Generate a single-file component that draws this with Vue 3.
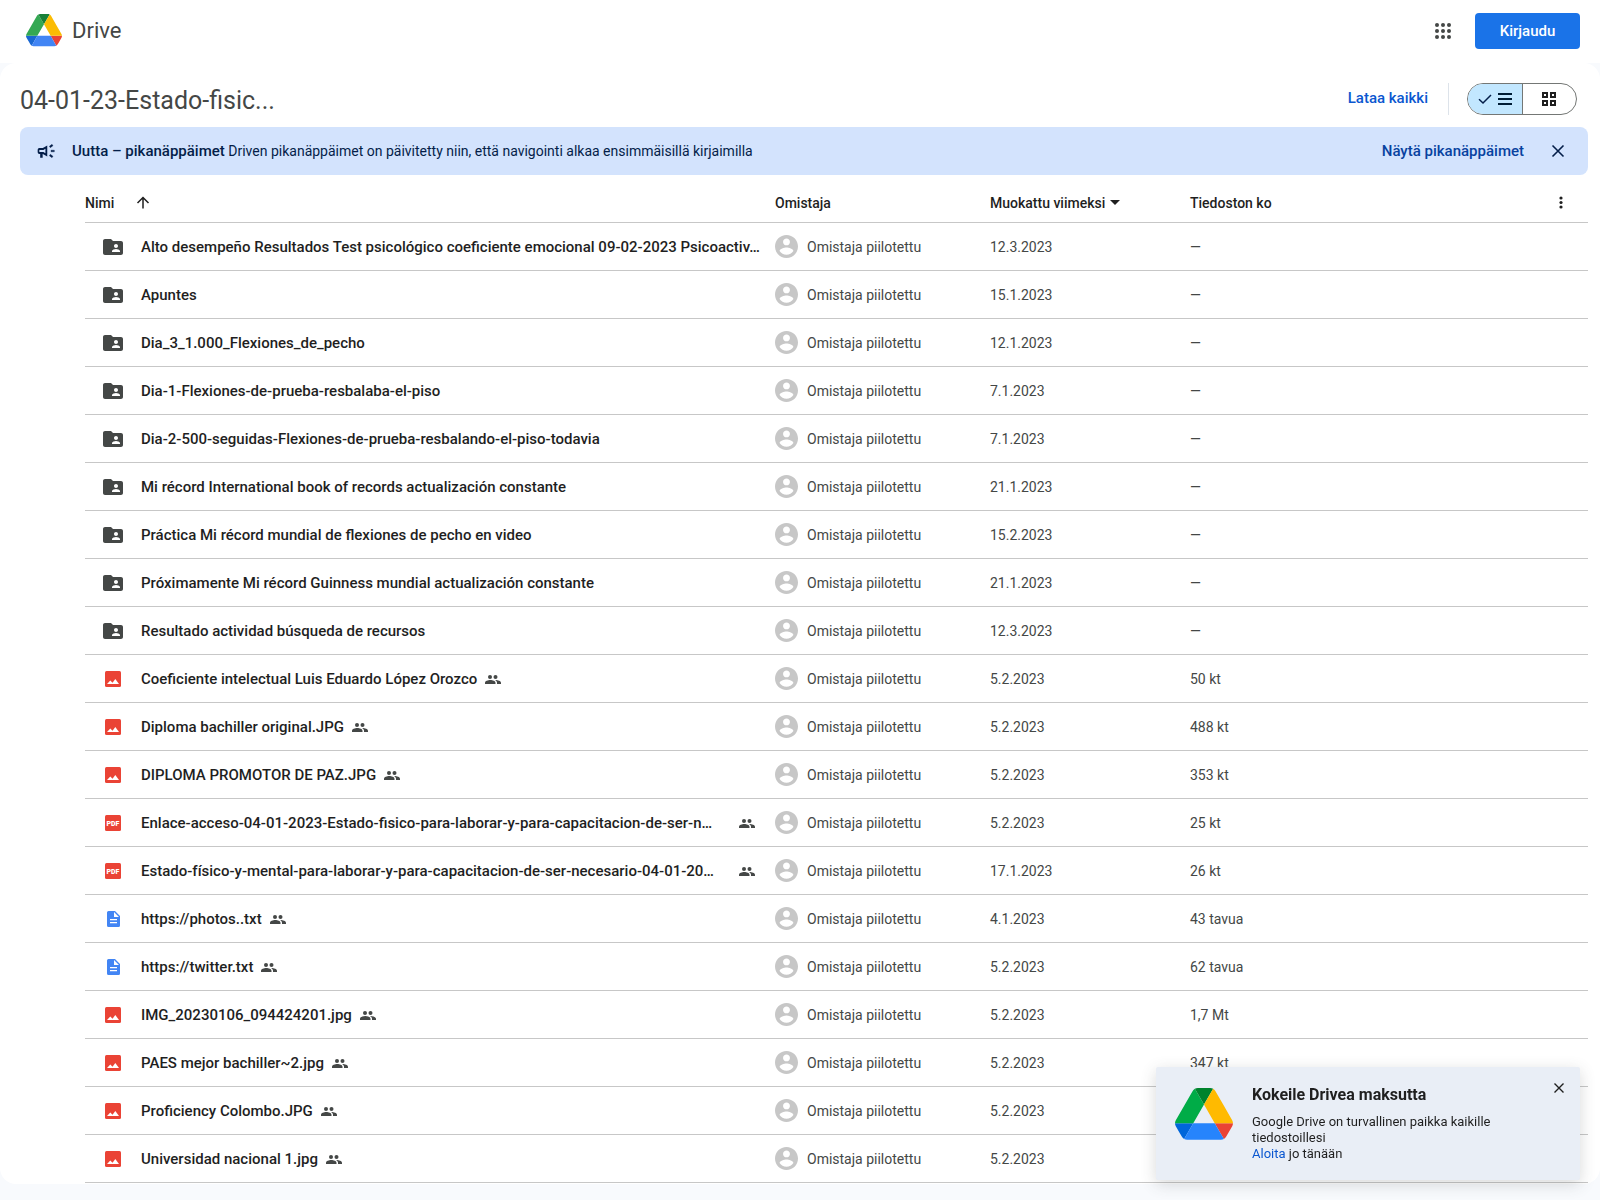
<script setup>
import { ref } from 'vue'

const logoParts = [
  { d: 'm6.6 66.85 3.85 6.65c.8 1.4 1.95 2.5 3.3 3.3l13.75-23.8h-27.5c0 1.55.4 3.1 1.2 4.5z', header: '#1967d2', promo: '#0066da' },
  { d: 'm43.65 25-13.75-23.8c-1.35.8-2.5 1.9-3.3 3.3l-25.4 44a9.06 9.06 0 0 0-1.2 4.5h27.5z', header: '#34a853', promo: '#00ac47' },
  { d: 'm73.55 76.8c1.35-.8 2.5-1.9 3.3-3.3l1.6-2.75 7.65-13.25c.8-1.4 1.2-2.95 1.2-4.5h-27.502z', header: '#ea4335', promo: '#ea4335' },
  { d: 'm43.65 25 13.75-23.8c-1.35-.8-2.9-1.2-4.5-1.2h-18.5c-1.6 0-3.15.45-4.5 1.2z', header: '#188038', promo: '#00832d' },
  { d: 'm59.8 53h-32.3l-13.75 23.8c1.35.8 2.9 1.2 4.5 1.2h50.8c1.6 0 3.15-.45 4.5-1.2z', header: '#4285f4', promo: '#2684fc' },
  { d: 'm73.4 26.5-12.7-22c-.8-1.4-1.95-2.5-3.3-3.3l-13.75 23.8 16.15 28h27.45c0-1.55-.4-3.1-1.2-4.5z', header: '#fbbc04', promo: '#ffba00' },
]

const dots = [6, 12, 18].flatMap((y) => [6, 12, 18].map((x) => ({ x, y })))

const view = ref('list')
const bannerOpen = ref(true)
const promoOpen = ref(true)

const files = [
  { type: 'folder', name: 'Alto desempeño Resultados Test psicológico coeficiente emocional 09-02-2023 Psicoactiv…', date: '12.3.2023', size: '—' },
  { type: 'folder', name: 'Apuntes', date: '15.1.2023', size: '—' },
  { type: 'folder', name: 'Dia_3_1.000_Flexiones_de_pecho', date: '12.1.2023', size: '—' },
  { type: 'folder', name: 'Dia-1-Flexiones-de-prueba-resbalaba-el-piso', date: '7.1.2023', size: '—' },
  { type: 'folder', name: 'Dia-2-500-seguidas-Flexiones-de-prueba-resbalando-el-piso-todavia', date: '7.1.2023', size: '—' },
  { type: 'folder', name: 'Mi récord International book of records actualización constante', date: '21.1.2023', size: '—' },
  { type: 'folder', name: 'Práctica Mi récord mundial de flexiones de pecho en video', date: '15.2.2023', size: '—' },
  { type: 'folder', name: 'Próximamente Mi récord Guinness mundial actualización constante', date: '21.1.2023', size: '—' },
  { type: 'folder', name: 'Resultado actividad búsqueda de recursos', date: '12.3.2023', size: '—' },
  { type: 'image', name: 'Coeficiente intelectual Luis Eduardo López Orozco', date: '5.2.2023', size: '50 kt' },
  { type: 'image', name: 'Diploma bachiller original.JPG', date: '5.2.2023', size: '488 kt' },
  { type: 'image', name: 'DIPLOMA PROMOTOR DE PAZ.JPG', date: '5.2.2023', size: '353 kt' },
  { type: 'pdf', name: 'Enlace-acceso-04-01-2023-Estado-fisico-para-laborar-y-para-capacitacion-de-ser-n…', date: '5.2.2023', size: '25 kt', long: true },
  { type: 'pdf', name: 'Estado-físico-y-mental-para-laborar-y-para-capacitacion-de-ser-necesario-04-01-20…', date: '17.1.2023', size: '26 kt', long: true },
  { type: 'text', name: 'https://photos..txt', date: '4.1.2023', size: '43 tavua' },
  { type: 'text', name: 'https://twitter.txt', date: '5.2.2023', size: '62 tavua' },
  { type: 'image', name: 'IMG_20230106_094424201.jpg', date: '5.2.2023', size: '1,7 Mt' },
  { type: 'image', name: 'PAES mejor bachiller~2.jpg', date: '5.2.2023', size: '347 kt' },
  { type: 'image', name: 'Proficiency Colombo.JPG', date: '5.2.2023', size: '' },
  { type: 'image', name: 'Universidad nacional 1.jpg', date: '5.2.2023', size: '' },
]
</script>

<template>
  <div class="page">
    <header class="topbar">
      <a class="brand" href="#">
        <svg class="brand-logo" viewBox="0 0 87.3 78" aria-hidden="true">
          <path v-for="p in logoParts" :key="p.d" :d="p.d" :fill="p.header" />
        </svg>
        <span>Drive</span>
      </a>
      <div class="account">
        <button class="icon-btn" aria-label="Google-sovellukset">
          <svg width="24" height="24" viewBox="0 0 24 24" fill="#444746">
            <circle v-for="d in dots" :key="d.x + '-' + d.y" :cx="d.x" :cy="d.y" r="2" />
          </svg>
        </button>
        <button class="signin">Kirjaudu</button>
      </div>
    </header>

    <main class="panel">
      <div class="titlebar">
        <h1>04-01-23-Estado-fisic...</h1>
        <div class="tools">
          <button class="download">Lataa kaikki</button>
          <div class="toggle" role="group" aria-label="Näkymä">
            <button :class="{ on: view === 'list' }" aria-label="Luettelo" @click="view = 'list'">
              <svg width="14" height="14" viewBox="0 0 14 14" fill="none" stroke="#041e49" stroke-width="1.5">
                <path d="M1 7.2 5 11 13 3" />
              </svg>
              <svg width="14" height="14" viewBox="0 0 14 14" fill="#001d35">
                <path d="M0 1h14v2H0zM0 6h14v2H0zM0 11h14v2H0z" />
              </svg>
            </button>
            <button :class="{ on: view === 'grid' }" aria-label="Ruudukko" @click="view = 'grid'">
              <svg width="14" height="14" viewBox="0 0 14 14" fill="none" stroke="#1f1f1f" stroke-width="2">
                <path d="M1 1h4v4H1zM9 1h4v4H9zM1 9h4v4H1zM9 9h4v4H9z" />
              </svg>
            </button>
          </div>
        </div>
      </div>

      <section v-if="bannerOpen" class="banner">
        <svg width="20" height="20" viewBox="0 0 24 24" fill="#041e49" aria-hidden="true">
          <path stroke="#041e49" stroke-width=".4" d="M18 11v2h4v-2h-4zm-2 6.61c.96.71 2.21 1.65 3.2 2.39.4-.53.8-1.07 1.2-1.6-.99-.74-2.24-1.68-3.2-2.4-.4.54-.8 1.08-1.2 1.61zM20.4 5.6c-.4-.53-.8-1.07-1.2-1.6-.99.74-2.24 1.68-3.2 2.4.4.53.8 1.07 1.2 1.6.96-.72 2.21-1.65 3.2-2.4z" />
          <path d="M4 8.500h4.200L13.500 5.300v13.400L8.200 15.500H8V20H5v-4.500H4a2 2 0 0 1-2-2v-3a2 2 0 0 1 2-2zm0 2.200v2.600h4.900l2.400 1.500V9.200l-2.400 1.500z" />
        </svg>
        <p><strong>Uutta – pikanäppäimet</strong> Driven pikanäppäimet on päivitetty niin, että navigointi alkaa ensimmäisillä kirjaimilla</p>
        <button class="shortcuts">Näytä pikanäppäimet</button>
        <button class="icon-btn" aria-label="Sulje" @click="bannerOpen = false">
          <svg width="20" height="20" viewBox="0 0 20 20" stroke="#041e49" stroke-width="1.6">
            <path d="M4.5 4.5l11 11M15.5 4.5l-11 11" />
          </svg>
        </button>
      </section>

      <table class="files">
        <colgroup>
          <col />
          <col class="c-owner" />
          <col class="c-date" />
          <col class="c-size" />
          <col class="c-more" />
        </colgroup>
        <thead>
          <tr>
            <th scope="col">
              <div class="head">
                <span>Nimi</span>
                <button class="icon-btn sort" aria-label="Käänteinen lajittelusuunta">
                  <svg width="14" height="14" viewBox="0 0 14 14" fill="none" stroke="#1f1f1f" stroke-width="1.5">
                    <path d="M7 12.500V1.500M1.500 7 7 1.500 12.500 7" />
                  </svg>
                </button>
              </div>
            </th>
            <th scope="col">Omistaja</th>
            <th scope="col">
              <div class="head tight">
                <span>Muokattu viimeksi</span>
                <svg width="10" height="5" viewBox="0 0 10 5" fill="#1f1f1f"><path d="M0 0h10L5 5z" /></svg>
              </div>
            </th>
            <th scope="col">Tiedoston ko</th>
            <th scope="col">
              <button class="icon-btn more" aria-label="Lisää vaihtoehtoja">
                <svg width="16" height="16" viewBox="0 0 16 16" fill="#1f1f1f">
                  <circle cx="8" cy="3" r="1.6" /><circle cx="8" cy="7.500" r="1.6" /><circle cx="8" cy="12" r="1.6" />
                </svg>
              </button>
            </th>
          </tr>
        </thead>
        <tbody>
          <tr v-for="f in files" :key="f.name">
            <td>
              <div class="name">
                <span class="type">
                  <svg v-if="f.type === 'folder'" width="24" height="24" viewBox="0 0 24 24" fill="#444746">
                    <path d="M20 6h-8l-2-2H4c-1.1 0-1.99.9-1.99 2L2 18c0 1.1.9 2 2 2h16c1.1 0 2-.9 2-2V8c0-1.1-.9-2-2-2zm-5 3c1.1 0 2 .9 2 2s-.9 2-2 2-2-.9-2-2 .9-2 2-2zm4 8h-8v-1c0-1.33 2.67-2 4-2s4 .67 4 2v1z" />
                  </svg>
                  <svg v-else-if="f.type === 'image'" width="16" height="16" viewBox="0 0 16 16">
                    <rect width="16" height="16" rx="1.5" fill="#ea4335" />
                    <path d="M2 13h12l-3.7-5-2.8 3.7L5.300 9.400z" fill="#fff" />
                  </svg>
                  <svg v-else-if="f.type === 'pdf'" width="16" height="16" viewBox="0 0 16 16">
                    <rect width="16" height="16" rx="1.5" fill="#ea4335" />
                    <text class="pdf" x="8" y="10.5" text-anchor="middle" fill="#fff">PDF</text>
                  </svg>
                  <svg v-else width="14" height="16" viewBox="0 0 14 16">
                    <path d="M2.500 0H9l5 5v9.500a1.500 1.500 0 0 1-1.500 1.500h-10A1.500 1.500 0 0 1 1 14.500v-13A1.500 1.500 0 0 1 2.500 0z" fill="#4285f4" />
                    <path d="M8 1v5h5zM4 8h7v1.200H4zM4 11h7v1.200H4z" fill="#fff" />
                  </svg>
                </span>
                <span class="label" :class="{ long: f.long }">{{ f.name }}</span>
                <svg v-if="f.type !== 'folder'" class="shared" width="16" height="16" viewBox="0 0 16 16" fill="#444746">
                  <circle cx="5" cy="6" r="2" />
                  <circle cx="10.5" cy="6" r="2" />
                  <path d="M0 13v-1.200C0 10 3 9 5.300 9s5.200 1 5.200 2.800V13zM10 9c2.500-.1 6 .9 6 2.800V13h-4v-1.200C12 10.600 11.200 9.700 10 9z" />
                </svg>
              </div>
            </td>
            <td>
              <div class="owner">
                <svg width="23" height="23" viewBox="2 2 20 20" fill="#c7c7c7">
                  <path d="M12 2C6.48 2 2 6.48 2 12s4.48 10 10 10 10-4.48 10-10S17.52 2 12 2zm0 3c1.66 0 3 1.34 3 3s-1.34 3-3 3-3-1.34-3-3 1.34-3 3-3zm0 14.2c-2.5 0-4.71-1.28-6-3.22.03-1.99 4-3.08 6-3.08 1.99 0 5.97 1.09 6 3.08-1.29 1.94-3.5 3.22-6 3.22z" />
                </svg>
                <span>Omistaja piilotettu</span>
              </div>
            </td>
            <td>{{ f.date }}</td>
            <td>{{ f.size }}</td>
            <td></td>
          </tr>
        </tbody>
      </table>
    </main>

    <aside v-if="promoOpen" class="promo">
      <svg class="promo-logo" viewBox="0 0 87.3 78" aria-hidden="true">
        <path v-for="p in logoParts" :key="p.d" :d="p.d" :fill="p.promo" />
      </svg>
      <div class="promo-text">
        <h2>Kokeile Drivea maksutta</h2>
        <p>Google Drive on turvallinen paikka kaikille tiedostoillesi</p>
        <p><a href="#">Aloita</a> jo tänään</p>
      </div>
      <button class="icon-btn" aria-label="Sulje" @click="promoOpen = false">
        <svg width="10" height="10" viewBox="0 0 10 10" stroke="#1f1f1f" stroke-width="1.4">
          <path d="M.5.5l9 9M9.500.500l-9 9" />
        </svg>
      </button>
    </aside>
  </div>
</template>

<style>
body {
  background: #f8fafd;
}
</style>

<style scoped>
.page {
  font: 14px/20px Roboto, "Liberation Sans", sans-serif;
  color: #1f1f1f;
  padding-bottom: 16px;
}

svg {
  display: block;
  flex: none;
}

button {
  font: inherit;
  color: inherit;
  border: 0;
  padding: 0;
  background: none;
  cursor: pointer;
}

.icon-btn {
  display: flex;
  flex: none;
}

.topbar {
  display: flex;
  align-items: center;
  justify-content: space-between;
  height: 63px;
  padding: 0 20px 2px 26px;
  box-sizing: border-box;
  background: #fff;
}

.brand {
  display: flex;
  align-items: center;
  gap: 10px;
  color: #444746;
  font-size: 22px;
  line-height: 26px;
  text-decoration: none;
}

.brand-logo {
  width: 36px;
}

.account {
  display: flex;
  align-items: center;
  gap: 20px;
}

.signin {
  width: 105px;
  height: 36px;
  border-radius: 4px;
  background: #1a73e8;
  color: #fff;
  font-size: 15px;
  font-weight: 500;
}

.panel {
  background: #fff;
  border-radius: 16px;
  padding: 0 12px 1px 20px;
}

.titlebar {
  display: flex;
  align-items: center;
  justify-content: space-between;
  height: 64px;
  padding: 8px 11px 0 0;
  box-sizing: border-box;
}

h1 {
  margin: 0;
  padding-top: 4px;
  font-size: 25px;
  line-height: 32px;
  font-weight: 400;
  color: #444746;
}

.tools {
  display: flex;
  align-items: center;
}

.download {
  height: 32px;
  padding: 0 20px 2px;
  border-right: 1px solid #dde3ea;
  margin-right: 18px;
  color: #0b57d0;
  font-size: 15px;
  font-weight: 500;
}

.toggle {
  display: flex;
  width: 110px;
  height: 32px;
  box-sizing: border-box;
  border: 1px solid #747775;
  border-radius: 16px;
  overflow: hidden;
}

.toggle button {
  flex: 1;
  display: flex;
  align-items: center;
  justify-content: center;
  gap: 6px;
}

.toggle button + button {
  border-left: 1px solid #747775;
}

.toggle .on {
  background: #c2e7ff;
}

.banner {
  display: flex;
  align-items: center;
  height: 48px;
  padding: 0 20px 0 16px;
  border-radius: 8px;
  background: #d3e3fd;
  color: #041e49;
}

.banner p {
  flex: 1;
  margin: 0 0 0 16px;
}

.banner strong {
  font-size: 15px;
  font-weight: 500;
}

.shortcuts {
  margin-right: 24px;
  color: #0842a0;
  font-size: 15px;
  font-weight: 500;
}

.files {
  width: calc(100% - 65px);
  margin-left: 65px;
  table-layout: fixed;
  border-spacing: 0;
}

.c-owner { width: 215px; }
.c-date { width: 200px; }
.c-size { width: 310px; }
.c-more { width: 88px; }

th,
td {
  height: 48px;
  box-sizing: border-box;
  padding: 0;
  border-bottom: 1px solid #c7c7c7;
  text-align: left;
  color: #444746;
  white-space: nowrap;
}

th {
  padding-top: 8px;
  color: #1f1f1f;
  font-weight: 500;
}

.head {
  display: flex;
  align-items: center;
}

.head.tight {
  gap: 5px;
}

.sort {
  margin-left: 22px;
}

.more {
  margin-left: 53px;
}

.name {
  display: flex;
  align-items: center;
  padding-right: 20px;
  color: #1f1f1f;
  font-size: 15px;
  font-weight: 500;
}

.type {
  display: flex;
  flex: none;
  justify-content: center;
  width: 24px;
  margin: 0 16px;
}

.label {
  min-width: 0;
}

.label.long {
  flex: 1;
}

.pdf {
  font-size: 7px;
  font-weight: 900;
}

.shared {
  margin-left: 8px;
}

.owner {
  display: flex;
  align-items: center;
  gap: 9px;
}

.promo {
  position: fixed;
  right: 20px;
  bottom: 20px;
  display: flex;
  align-items: flex-start;
  width: 424px;
  min-height: 113px;
  box-sizing: border-box;
  padding: 16px;
  border-radius: 2px;
  background: #e9eef6;
  box-shadow: 0 4px 16px rgba(60, 64, 67, 0.2);
}

.promo-logo {
  width: 58px;
  margin: 5px 19px 0 3px;
}

.promo-text {
  flex: 1;
  font-size: 13px;
  line-height: 16px;
}

.promo h2 {
  margin: 0 0 7px;
  font-size: 16px;
  line-height: 24px;
  font-weight: 700;
}

.promo p {
  margin: 0;
}

.promo a {
  color: #0b57d0;
  text-decoration: none;
}
</style>
